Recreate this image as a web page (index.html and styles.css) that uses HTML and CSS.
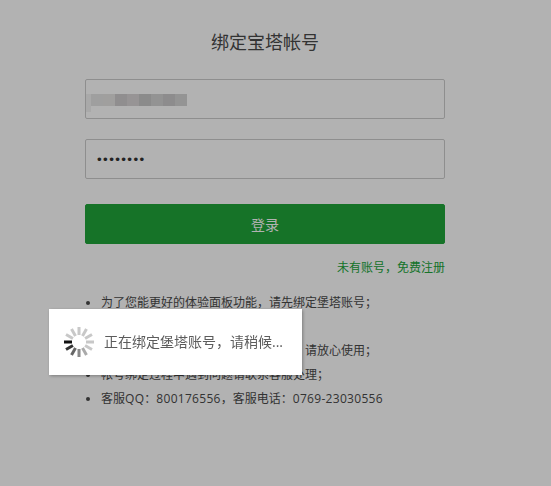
FILE: index.html
```html
<!DOCTYPE html>
<html lang="zh-CN">
<head>
<meta charset="utf-8">
<title>绑定宝塔帐号</title>
<link rel="stylesheet" href="styles.css">
</head>
<body>
<main class="panel">
  <h1 class="title">绑定宝塔帐号</h1>
  <form class="form">
    <div class="field field-blurred">
      <div class="smear"></div>
      <div class="pixels"><i></i><i></i><i></i><i></i><i></i><i></i><i></i><i></i></div>
    </div>
    <input class="field field-pass" type="password" value="12345678">
    <button class="submit" type="button">登录</button>
    <p class="register"><a href="#">未有账号，免费注册</a></p>
    <ul class="notes">
      <li>为了您能更好的体验面板功能，请先绑定堡塔账号；</li>
      <li>如果您还没有账号，请先免费注册；</li>
      <li>我们不会保存您的账号和密码等信息，请放心使用；</li>
      <li>帐号绑定过程中遇到问题请联系客服处理；</li>
      <li>客服<span class="num">QQ</span>：<span class="num">800176556</span>，客服电话：<span class="num">0769-23030556</span></li>
    </ul>
  </form>
</main>
<div class="shade"></div>
<div class="toast">
  <svg class="spinner" viewBox="-16 -16 32 32" width="32" height="32" aria-hidden="true">
    <g class="spokes">
      <rect class="s1" x="-15" y="-1.5" width="8" height="3"/>
      <rect class="s2" x="-15" y="-1.5" width="8" height="3" transform="rotate(-30)"/>
      <rect class="s3" x="-15" y="-1.5" width="8" height="3" transform="rotate(-60)"/>
      <rect class="s4" x="-15" y="-1.5" width="8" height="3" transform="rotate(-90)"/>
      <rect class="s5" x="-15" y="-1.5" width="8" height="3" transform="rotate(-120)"/>
      <rect class="s6" x="-15" y="-1.5" width="8" height="3" transform="rotate(-150)"/>
      <rect class="s6" x="-15" y="-1.5" width="8" height="3" transform="rotate(180)"/>
      <rect class="s6" x="-15" y="-1.5" width="8" height="3" transform="rotate(150)"/>
      <rect class="s6" x="-15" y="-1.5" width="8" height="3" transform="rotate(120)"/>
      <rect class="s6" x="-15" y="-1.5" width="8" height="3" transform="rotate(90)"/>
      <rect class="s6" x="-15" y="-1.5" width="8" height="3" transform="rotate(60)"/>
      <rect class="s6" x="-15" y="-1.5" width="8" height="3" transform="rotate(30)"/>
    </g>
  </svg>
  <span class="toast-text">正在绑定堡塔账号，请稍候...</span>
</div>
</body>
</html>
```
FILE: styles.css
```css
* { box-sizing: border-box; }
html, body { margin: 0; height: 100%; }
body {
  background: #fff;
  color: #444;
  font-family: "Open Sans", "Noto Sans CJK SC", sans-serif;
  font-size: 12px;
  overflow: hidden;
}
.panel { width: 360px; margin-left: 85px; }
.title {
  margin: 0;
  padding-top: 30px;
  height: 79px;
  font-size: 18px;
  line-height: 24px;
  font-weight: 400;
  color: #4a4a4a;
  text-align: center;
}
.form { display: flex; flex-direction: column; }
.field {
  display: flex;
  align-items: flex-start;
  width: 100%;
  height: 40px;
  border: 1px solid #ccc;
  border-radius: 2px;
  background: #fff;
  outline: none;
}
.field-blurred { margin-bottom: 20px; }
.smear {
  width: 5px;
  height: 18px;
  margin-top: 14px;
  background: #f2f2f2;
}
.pixels { display: flex; margin: 14px 0 0 0; height: 12px; }
.pixels i { display: block; width: 12px; }
.pixels i:nth-child(1) { background: #e4e4e4; }
.pixels i:nth-child(2) { background: #e6e4e2; }
.pixels i:nth-child(3) { background: #cfcccd; }
.pixels i:nth-child(4) { background: #d8d5d6; }
.pixels i:nth-child(5) { background: #c8c8c8; }
.pixels i:nth-child(6) { background: #d3d3d3; }
.pixels i:nth-child(7) { background: #cbc9cb; }
.pixels i:nth-child(8) { background: #d4d4d4; }
.field-pass {
  padding: 0 11px;
  color: #333;
  font-family: "Liberation Sans", sans-serif;
  font-size: 13.33px;
  letter-spacing: 1.4px;
}
.submit {
  height: 40px;
  margin-top: 25px;
  border: 1px solid #20a53a;
  border-radius: 2px;
  background: #20a53a;
  color: #fff;
  font-family: inherit;
  font-size: 14px;
}
.register { margin: 15px 0 0; height: 18px; line-height: 18px; text-align: right; }
.register a { color: #20a53a; text-decoration: none; }
.notes { margin: 14px 0 0; padding: 0 0 0 16px; line-height: 24px; color: #4a4a4a; }
.num { letter-spacing: .3px; }
.shade { position: fixed; inset: 0; background: rgba(0, 0, 0, .3); }
.toast {
  position: fixed;
  left: 49px;
  top: 309px;
  width: 253px;
  height: 66px;
  display: flex;
  align-items: center;
  gap: 9px;
  padding-left: 14px;
  background: #fff;
  box-shadow: 1px 1px 3px rgba(0, 0, 0, .3);
}
.spinner { flex: none; }
.toast-text { font-size: 14px; color: #5c5c5c; white-space: nowrap; position: relative; top: -1px; }
.s1 { fill: #111; }
.s2 { fill: #333; }
.s3 { fill: #666; }
.s4 { fill: #888; }
.s5 { fill: #aaa; }
.s6 { fill: #c8c8c8; }
```
